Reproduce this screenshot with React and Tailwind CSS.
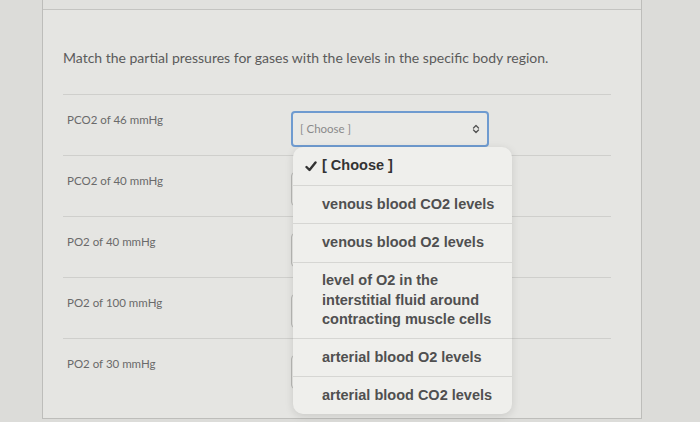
import React from 'react';

const rows = [
  'PCO2 of 46 mmHg',
  'PCO2 of 40 mmHg',
  'PO2 of 40 mmHg',
  'PO2 of 100 mmHg',
  'PO2 of 30 mmHg',
];

const options = [
  { label: '[ Choose ]', checked: true, h: 'h-[38px]' },
  { label: 'venous blood CO2 levels', h: 'h-[38px]' },
  { label: 'venous blood O2 levels', h: 'h-[39px]' },
  { label: 'level of O2 in the interstitial fluid around contracting muscle cells', h: 'h-[76px]' },
  { label: 'arterial blood O2 levels', h: 'h-[38px]' },
  { label: 'arterial blood CO2 levels', h: 'h-[38px]' },
];

const App = () => {
  return (
    <div
      className="relative w-[700px] h-[422px] overflow-hidden bg-[#dcdcd9] flex"
      style={{ fontFamily: 'Lato, "Open Sans", sans-serif' }}
    >
      {/* Quiz card */}
      <div className="ml-[42px] w-[600px] h-[419px] bg-[#e5e5e2] border-x border-b border-[#bdbdba] flex flex-col">
        <div className="h-[10px] border-b border-[#c4c4c1] bg-[#e1e1de]" />

        <div className="pl-[20px] pr-[30px]">
          <p className="mt-[39px] text-[14px] leading-[17px] text-[#5b5b5b]">
            Match the partial pressures for gases with the levels in the specific body region.
          </p>

          {/* Rows */}
          <div className="mt-[28px]">
            {rows.map((r, i) => (
              <div key={r} className="h-[61px] border-t border-[#cfcfcc] flex">
                <div className="w-[228px] pl-[4px] pt-[17px] text-[11.5px] leading-[16px] text-[#6a6a6a]">
                  {r}
                </div>
                <div className="pt-[16px]">
                  {i === 0 ? (
                    <div className="w-[198px] h-[36px] rounded-[4px] border-2 border-[#6f9bd0] bg-[#e9e9e6] flex items-center justify-between pl-[7px] pr-[7px]">
                      <span className="text-[11.5px] text-[#8a8a8a]">[ Choose ]</span>
                      <svg width="8" height="10" viewBox="0 0 8 10" fill="none" stroke="#555" strokeWidth="1.4" strokeLinecap="round" strokeLinejoin="round">
                        <path d="M1.5 4 L4 1.5 L6.5 4" />
                        <path d="M1.5 6 L4 8.5 L6.5 6" />
                      </svg>
                    </div>
                  ) : (
                    <div className="w-[198px] h-[34px] rounded-[4px] border border-[#b8b8b5] bg-[#e7e7e4]" />
                  )}
                </div>
              </div>
            ))}
          </div>
        </div>
      </div>

      {/* Open select menu */}
      <div
        className="absolute left-[293px] top-[147px] w-[219px] rounded-[10px] bg-[#efefec] shadow-[0_2px_8px_rgba(0,0,0,0.12)] flex flex-col overflow-hidden"
        style={{ fontFamily: '"Liberation Sans", Arial, sans-serif' }}
      >
        {options.map((o, i) => (
          <div
            key={o.label}
            className={`${o.h} flex items-center pl-[29px] pr-[14px] text-[14.5px] leading-[19.5px] font-bold text-[#505050] ${i > 0 ? 'border-t border-[#d6d6d3]' : ''}`}
          >
            {o.checked ? (
              <span className="-ml-[17px] flex items-center gap-[5px] text-[#333]">
                <svg width="12" height="11" viewBox="0 0 12 11" fill="none" stroke="#333" strokeWidth="2.4" strokeLinecap="round" strokeLinejoin="round">
                  <path d="M1.5 6 L4.5 9 L10.5 1.5" />
                </svg>
                {o.label}
              </span>
            ) : (
              <span>{o.label}</span>
            )}
          </div>
        ))}
      </div>
    </div>
  );
};

export default App;
